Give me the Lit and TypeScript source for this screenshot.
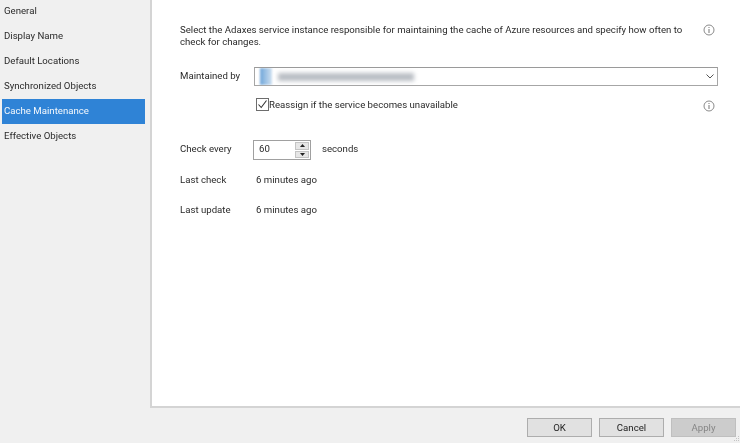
import { LitElement, html, css } from "lit";
import { customElement } from "lit/decorators.js";

const info = html`<svg class="info" width="12" height="12" viewBox="0 0 12 12"><circle cx="6" cy="6" r="5" fill="none" stroke="#8a8a8a"/><rect x="5.5" y="5" width="1" height="4" fill="#777"/><rect x="5.5" y="3" width="1" height="1" fill="#777"/></svg>`;

@customElement("app-root")
export class AppRoot extends LitElement {
  static styles = css`
    :host { display: block; width: 740px; height: 443px; overflow: hidden; background: #f0f0f0; color: #2a2a2a; font: 9.65px/12px Roboto, sans-serif; filter: blur(0.3px); }
    .top { display: flex; height: 408px; }
    .side { width: 150px; box-sizing: border-box; padding: 0 5px 0 2px; margin-top: -1px; flex: none; }
    .item { height: 25px; line-height: 23px; padding-left: 2px; box-sizing: border-box; }
    .item.sel { background: #2f83d6; color: #f4f8fc; }
    .panel { flex: 1; background: #fff; border-left: 2px solid #d4d4d4; border-bottom: 2px solid #d4d4d4; box-sizing: border-box; padding: 24px 22px 0 28px; }
    .intro { display: flex; justify-content: space-between; align-items: flex-start; }
    .intro p { margin: 0; width: 510px; }
    .info { margin-right: 3px; flex: none; }
    .row { display: flex; align-items: center; }
    .label { width: 74px; flex: none; margin-bottom: 2px; }
    .combo { flex: 1; height: 19px; box-sizing: border-box; border: 1px solid #a6a6a6; border-top-color: #9a9a9a; display: flex; align-items: center; background: #fff; padding-right: 3px; overflow: hidden; }
    .swatch { width: 12px; height: 17px; background: linear-gradient(90deg, #6fa6da, #cfe0f0); flex: none; margin-left: 5px; filter: blur(0.8px); }
    .blur { width: 136px; height: 8px; margin-left: 6px; background: #b9bec4; filter: blur(2px); }
    .chev { margin-left: auto; }
    .maintained { margin-top: 19px; }
    .check { margin-top: 12px; padding-left: 76px; display: flex; align-items: flex-start; }
    .check .box { width: 13px; height: 13px; box-sizing: border-box; border: 1px solid #6d6d6d; background: #fff; flex: none; }
    .check .text { flex: 1; line-height: 13px; }
    .check .info { margin-top: 2px; }
    .spinrow { margin-top: 28px; height: 20px; }
    .spinrow .label { margin-right: -1px; }
    .spin { width: 58px; height: 20px; box-sizing: border-box; border: 1px solid #a0a0a0; display: flex; background: #fff; }
    .spin .val { flex: 1; padding-left: 5px; line-height: 15px; }
    .arrows { width: 14px; display: flex; flex-direction: column; gap: 1px; padding: 1px; }
    .arrows span { flex: 1; background: #e6e6e6; border: 1px solid #c4c4c4; display: flex; align-items: center; justify-content: center; }
    .seconds { margin: 0 0 2px 11px; }
    .stat { height: 30px; }
    .stat .label { margin-right: 2px; }
    .stat .value { margin-bottom: 2px; }
    .stat.first { margin-top: 6px; }
    .foot { height: 35px; display: flex; justify-content: flex-end; align-items: flex-start; gap: 7px; padding: 10px 4px 0 0; box-sizing: border-box; position: relative; }
    .btn { width: 65px; height: 19px; box-sizing: border-box; border: 1px solid #adadad; background: #e1e1e1; text-align: center; line-height: 17px; color: #222; }
    .btn.off { background: #cccccc; border-color: #bfbfbf; color: #858585; }
    .grip { position: absolute; right: 0; bottom: 0; }
  `;

  render() {
    const items = ["General", "Display Name", "Default Locations", "Synchronized Objects", "Cache Maintenance", "Effective Objects"];
    return html`
      <div class="top">
        <nav class="side">
          ${items.map((t) => html`<div class="item ${t === "Cache Maintenance" ? "sel" : ""}">${t}</div>`)}
        </nav>
        <main class="panel">
          <div class="intro">
            <p>Select the Adaxes service instance responsible for maintaining the cache of Azure resources and specify how often to check for changes.</p>
            ${info}
          </div>
          <div class="row maintained">
            <div class="label">Maintained by</div>
            <div class="combo">
              <div class="swatch"></div>
              <div class="blur"></div>
              <svg class="chev" width="8" height="5" viewBox="0 0 8 5"><path d="M0.5 0.5 4 4 7.5 0.5" fill="none" stroke="#555"/></svg>
            </div>
          </div>
          <div class="check">
            <div class="box"><svg width="11" height="11" viewBox="0 0 11 11"><path d="M1.5 5.5 4.2 8.5 9.5 1.5" fill="none" stroke="#333" stroke-width="1.1"/></svg></div>
            <div class="text">Reassign if the service becomes unavailable</div>
            ${info}
          </div>
          <div class="row spinrow">
            <div class="label">Check every</div>
            <div class="spin">
              <div class="val">60</div>
              <div class="arrows">
                <span><svg width="5" height="3" viewBox="0 0 5 3"><path d="M2.5 0 5 3H0z" fill="#222"/></svg></span>
                <span><svg width="5" height="3" viewBox="0 0 5 3"><path d="M2.5 3 5 0H0z" fill="#222"/></svg></span>
              </div>
            </div>
            <div class="seconds">seconds</div>
          </div>
          <div class="row stat first"><div class="label">Last check</div><div class="value">6 minutes ago</div></div>
          <div class="row stat"><div class="label">Last update</div><div class="value">6 minutes ago</div></div>
        </main>
      </div>
      <footer class="foot">
        <div class="btn">OK</div>
        <div class="btn">Cancel</div>
        <div class="btn off">Apply</div>
        <svg class="grip" width="8" height="8" viewBox="0 0 8 8" fill="#c4c4c4"><rect x="6" y="1" width="1" height="1"/><rect x="4" y="3" width="1" height="1"/><rect x="6" y="3" width="1" height="1"/><rect x="2" y="5" width="1" height="1"/><rect x="4" y="5" width="1" height="1"/><rect x="6" y="5" width="1" height="1"/></svg>
      </footer>
    `;
  }
}
